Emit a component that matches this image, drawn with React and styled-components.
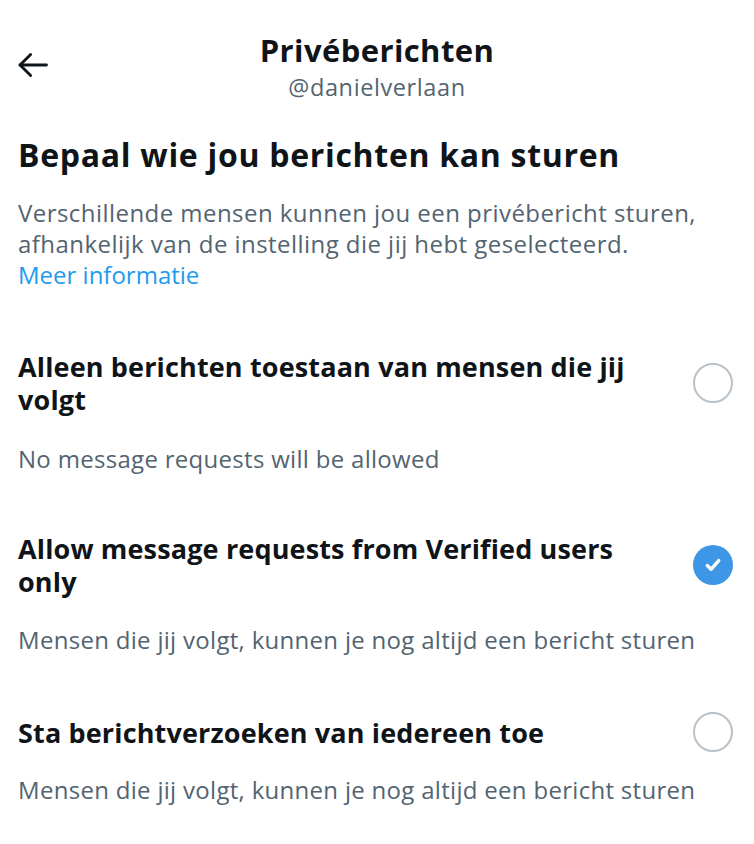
import React from "react";
import styled, { createGlobalStyle } from "styled-components";

const Global = createGlobalStyle`
  html, body { margin: 0; padding: 0; background: #ffffff; }
  body { font-family: "Open Sans", "Noto Sans", sans-serif; color: #0f1419; }
`;

const Page = styled.div`
  width: 754px;
  min-height: 844px;
  background: #fff;
`;

const Header = styled.header`
  display: grid;
  grid-template-columns: 60px 1fr 60px;
  align-items: start;
  padding-top: 32px;
`;

const BackButton = styled.button`
  border: 0;
  background: none;
  padding: 0 0 0 14px;
  margin-top: 14px;
  display: flex;
  align-items: center;
  height: 38px;
  cursor: pointer;
  color: #0f1419;
`;

const TitleBlock = styled.div`
  display: flex;
  flex-direction: column;
  align-items: center;
`;

const Title = styled.h1`
  margin: 0;
  font-size: 31px;
  line-height: 36px;
  font-weight: 700;
  letter-spacing: 0.4px;
`;

const Handle = styled.div`
  margin-top: 6px;
  font-size: 23.5px;
  line-height: 26px;
  letter-spacing: 0.6px;
  color: #536471;
`;

const Content = styled.main`
  padding: 35px 18px 0 18px;
`;

const Heading = styled.h2`
  margin: 0;
  font-size: 32px;
  line-height: 40px;
  font-weight: 700;
  letter-spacing: 0.7px;
`;

const Lead = styled.p`
  margin: 22px 0 0 0;
  font-size: 24px;
  line-height: 31px;
  letter-spacing: 0.45px;
  color: #536471;
`;

const Link = styled.a`
  color: #1d9bf0;
  text-decoration: none;
  letter-spacing: 0;
`;

const Options = styled.div`
  display: flex;
  flex-direction: column;
  margin-top: 60px;
`;

const Option = styled.div`
  display: flex;
  flex-direction: column;
  padding-bottom: ${(p) => p.$gap}px;
`;

const OptionRow = styled.label`
  display: flex;
  align-items: center;
  justify-content: space-between;
  gap: 24px;
`;

const OptionTitle = styled.div`
  font-size: 27px;
  line-height: 33px;
  font-weight: 700;
  letter-spacing: 0.15px;
  max-width: 630px;
`;

const OptionNote = styled.div`
  margin-top: ${(p) => p.$top}px;
  font-size: 24px;
  line-height: 31px;
  letter-spacing: 0.3px;
  color: #536471;
`;

const Radio = styled.span`
  flex: 0 0 auto;
  width: 40px;
  height: 40px;
  box-sizing: border-box;
  border-radius: 50%;
  margin-right: 3px;
  display: flex;
  align-items: center;
  justify-content: center;
  border: ${(p) => (p.$checked ? "none" : "2.5px solid #b9c2c9")};
  background: ${(p) => (p.$checked ? "#3d97e6" : "transparent")};
`;

const BackArrow = () => (
  <svg width="38" height="38" viewBox="0 0 24 24" fill="none" stroke="currentColor"
    strokeWidth="1.8" strokeLinecap="round" strokeLinejoin="round">
    <path d="M20.5 12H3.8" />
    <path d="M10.5 5.3L3.8 12l6.7 6.7" />
  </svg>
);

const Check = () => (
  <svg width="26" height="26" viewBox="0 0 20 20" fill="none" stroke="#fff"
    strokeWidth="2.6" strokeLinecap="round" strokeLinejoin="round">
    <path d="M5.6 10.4l2.9 2.9L14.4 6.6" />
  </svg>
);

const options = [
  {
    title: "Alleen berichten toestaan van mensen die jij volgt",
    note: "No message requests will be allowed",
    checked: false,
    top: 27,
    gap: 58,
  },
  {
    title: "Allow message requests from Verified users only",
    note: "Mensen die jij volgt, kunnen je nog altijd een bericht sturen",
    checked: true,
    top: 26,
    gap: 57,
  },
  {
    title: "Sta berichtverzoeken van iedereen toe",
    note: "Mensen die jij volgt, kunnen je nog altijd een bericht sturen",
    checked: false,
    top: 22,
    gap: 0,
  },
];

export default function App() {
  return (
    <Page>
      <Global />
      <Header>
        <BackButton aria-label="Terug">
          <BackArrow />
        </BackButton>
        <TitleBlock>
          <Title>Privéberichten</Title>
          <Handle>@danielverlaan</Handle>
        </TitleBlock>
        <span />
      </Header>
      <Content>
        <Heading>Bepaal wie jou berichten kan sturen</Heading>
        <Lead>
          Verschillende mensen kunnen jou een privébericht sturen,
          <br />
          afhankelijk van de instelling die jij hebt geselecteerd.
          <br />
          <Link href="#">Meer informatie</Link>
        </Lead>
        <Options>
          {options.map((o) => (
            <Option key={o.title} $gap={o.gap}>
              <OptionRow>
                <OptionTitle>{o.title}</OptionTitle>
                <Radio $checked={o.checked}>{o.checked && <Check />}</Radio>
              </OptionRow>
              <OptionNote $top={o.top}>{o.note}</OptionNote>
            </Option>
          ))}
        </Options>
      </Content>
    </Page>
  );
}
